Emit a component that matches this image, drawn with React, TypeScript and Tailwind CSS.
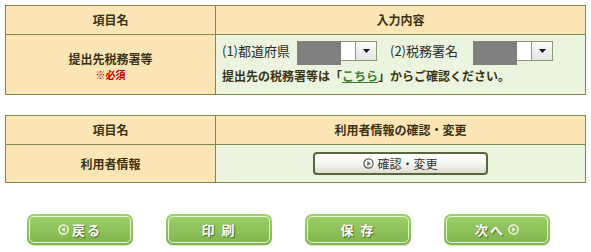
import { useState } from "react";

const jp = { fontFamily: '"Noto Sans CJK JP", "Noto Sans", sans-serif' };

function Select({ label }: { label: string }) {
  const [value] = useState("");
  return (
    <div className="relative flex h-[20px] w-[80px] items-stretch border border-[#8a9a6a] bg-white" title={label}>
      {/* redacted value */}
      <div className="absolute left-[-1px] top-[-1px] h-[24px] w-[44px] bg-[#7f7f7f]" />
      <div className="flex-1">{value}</div>
      <div className="flex w-[21px] items-center justify-center border-l border-[#8a9a6a] bg-gradient-to-b from-[#fbfbfb] to-[#e4e4e4]">
        <svg width="7" height="4" viewBox="0 0 7 4">
          <path d="M0 0h7L3.5 4z" fill="#111" />
        </svg>
      </div>
    </div>
  );
}

function GreenButton({ children }: { children: React.ReactNode }) {
  return (
    <button className="flex h-[31px] w-[106px] items-center justify-center rounded-[7px] bg-gradient-to-b from-[#9fd06a] to-[#7fb44a] p-[2px] shadow-[0_1px_1px_rgba(0,0,0,0.15)]">
      <span className="flex h-full w-full items-center justify-center gap-[3px] rounded-[5px] border border-[#e6f4d4] text-[13px] font-bold tracking-[2px] text-white [text-shadow:1px_1px_1px_rgba(40,70,10,0.7)]">
        {children}
      </span>
    </button>
  );
}

function CircleArrow({ dir, color = "#fff", fill = "#fff" }: { dir: "left" | "right"; color?: string; fill?: string }) {
  return (
    <svg width="11" height="11" viewBox="0 0 11 11">
      <circle cx="5.5" cy="5.5" r="4.6" fill="none" stroke={color} strokeWidth="1.2" />
      {dir === "right" ? (
        <path d="M4.3 3.3v4.4L7.6 5.5z" fill={fill} />
      ) : (
        <path d="M6.7 3.3v4.4L3.4 5.5z" fill={fill} />
      )}
    </svg>
  );
}

export default function App() {
  const head = "border border-[#7c8a4e] bg-[#fde6b6] text-center text-[12px] font-bold text-[#3b3214]";
  return (
    <div className="h-[252px] w-[591px] bg-white pt-[5px]" style={jp}>
      <table className="ml-[5px] w-[581px] border-collapse">
        <tbody>
          <tr className="h-[29px]">
            <th className={`${head} w-[210px]`}>項目名</th>
            <th className={head}>入力内容</th>
          </tr>
          <tr className="h-[60px]">
            <td className={head}>
              <div className="mt-[2px] leading-[17px]">提出先税務署等</div>
              <div className="text-[10px] leading-[15px] text-[#c00000]">※必須</div>
            </td>
            <td className="border border-[#7c8a4e] bg-[#ebf4df] pl-[6px] align-top text-[#2c2c2c]">
              <div className="mt-[6px] flex items-center text-[13px]">
                <span className="w-[75px]">(1)都道府県</span>
                <Select label="都道府県" />
                <span className="ml-[13px] w-[83px]">(2)税務署名</span>
                <Select label="税務署名" />
              </div>
              <div className="mt-[6px] text-[12px] font-bold text-[#3b3214]">
                提出先の税務署等は「<span className="text-[#3c7d2e] underline">こちら</span>」からご確認ください。
              </div>
            </td>
          </tr>
        </tbody>
      </table>

      <table className="ml-[5px] mt-[20px] w-[581px] border-collapse">
        <tbody>
          <tr className="h-[29px]">
            <th className={`${head} w-[210px]`}>項目名</th>
            <th className={head}>利用者情報の確認・変更</th>
          </tr>
          <tr className="h-[38px]">
            <td className={head}>利用者情報</td>
            <td className="border border-[#7c8a4e] bg-[#ebf4df]">
              <div className="flex justify-center">
                <button className="flex h-[23px] w-[175px] items-center justify-center gap-[3px] rounded-[4px] border-2 border-[#58673a] bg-gradient-to-b from-white via-[#f7f7f2] to-[#dcdcd0] text-[12px] text-[#333]">
                  <CircleArrow dir="right" color="#555" fill="#555" />
                  確認・変更
                </button>
              </div>
            </td>
          </tr>
        </tbody>
      </table>

      <div className="mt-[31px] flex gap-[33px] pl-[27px]">
        <GreenButton>
          <CircleArrow dir="left" />
          戻る
        </GreenButton>
        <GreenButton>印 刷</GreenButton>
        <GreenButton>保 存</GreenButton>
        <GreenButton>
          次へ
          <CircleArrow dir="right" />
        </GreenButton>
      </div>
    </div>
  );
}
